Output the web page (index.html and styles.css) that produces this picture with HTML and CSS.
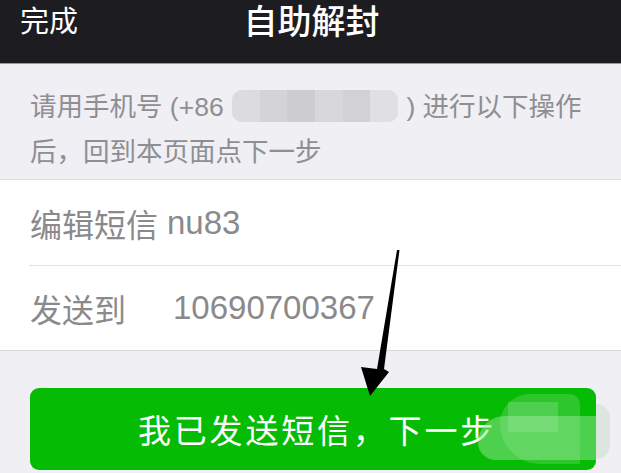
FILE: index.html
```html
<!DOCTYPE html>
<html lang="zh">
<head>
<meta charset="utf-8">
<title>自助解封</title>
<link rel="stylesheet" href="styles.css">
</head>
<body>
<div class="screen">
  <header class="nav">
    <span class="nav-left">完成</span>
    <span class="nav-title">自助解封</span>
  </header>
  <section class="notice">
    <p class="notice-text">请用手机号 (+86&nbsp;<span class="masked"><span class="px p1"></span><span class="px p2"></span><span class="px p3"></span><span class="px p4"></span><span class="px p5"></span><span class="px p6"></span></span>&nbsp;) 进行以下操作后，回到本页面点下一步</p>
  </section>
  <section class="list">
    <div class="row"><span class="label">编辑短信</span><span class="value">nu83</span></div>
    <div class="row"><span class="label wide">发送到</span><span class="value">10690700367</span></div>
  </section>
  <section class="actions">
    <button class="primary">我已发送短信，下一步</button>
    <div class="blur">
      <span class="b b1"></span><span class="b b2"></span><span class="b b3"></span><span class="b b4"></span>
    </div>
  </section>
  <svg class="arrow" width="621" height="473" viewBox="0 0 621 473">
    <polygon points="397,250 399.5,250 384,369 389,372 370,396 361,367 377,369" fill="#000"/>
  </svg>
</div>
</body>
</html>
```
FILE: styles.css
```css
* { box-sizing: border-box; margin: 0; padding: 0; }
html, body { width: 621px; height: 473px; overflow: hidden; }
body {
  background: #efeff4;
  font-family: "Liberation Sans", "Noto Sans CJK SC", sans-serif;
}
.screen { position: relative; width: 621px; height: 473px; background: #efeff4; }
.nav {
  height: 64px;
  background: #1d1c21;
  border-bottom: 1px solid #9a9a9e;
  display: flex;
  align-items: center;
  justify-content: center;
  position: relative;
  color: #fff;
  padding-bottom: 20px;
}
.nav-left {
  position: absolute;
  left: 20px;
  top: 2px;
  font-size: 29px;
  line-height: 40px;
}
.nav-title {
  font-size: 34px;
  line-height: 44px;
  font-weight: 500;
  margin-left: 2px;
}
.notice {
  height: 116px;
  border-bottom: 1px solid #dcdce0;
  padding: 21px 16px 0 30px;
}
.notice-text {
  color: #8e8e93;
  font-size: 26.5px;
  line-height: 45px;
}
.masked {
  display: inline-flex;
  width: 166px;
  height: 32px;
  vertical-align: -6px;
  background: #e4e4e8;
  border-radius: 10px;
  overflow: hidden;
  margin: 0 1px;
}
.px { flex: 1; }
.p1 { background: #dcdce0; }
.p2 { background: #d4d4d8; }
.p3 { background: #cdcdd1; }
.p4 { background: #d8d8dc; }
.p5 { background: #d2d2d6; }
.p6 { background: #e0e0e4; }
.list {
  background: #fff;
  border-bottom: 1px solid #d8d8dc;
  padding-left: 29px;
}
.row {
  height: 85px;
  display: flex;
  align-items: center;
  color: #8a8a8c;
  font-size: 32px;
  gap: 9px;
}
.row + .row { border-top: 1.5px solid #e2e2e4; }
.label { padding-left: 1px; }
.label.wide { width: 135px; }
.value { font-size: 33px; }
.actions {
  padding: 37px 25px 0 30px;
  position: relative;
}
.primary {
  width: 566px;
  height: 82px;
  border: none;
  border-radius: 9px;
  background: #05bb04;
  color: #fff;
  font-family: "Liberation Sans", "Noto Sans CJK SC", sans-serif;
  font-size: 33px;
  letter-spacing: 2.8px;
  padding-left: 8px;
}
.blur {
  position: absolute;
  left: 478px;
  top: 43px;
  width: 132px;
  height: 72px;
}
.b { position: absolute; display: block; }
.b1 { left: 22px; top: 0; width: 80px; height: 70px; background: rgba(120, 220, 120, 0.35); border-radius: 30px 10px 0 40px; }
.b2 { left: 0; top: 22px; width: 118px; height: 44px; background: rgba(150, 230, 150, 0.5); border-radius: 30px 0 0 20px; }
.b3 { left: 30px; top: 8px; width: 50px; height: 30px; background: rgba(180, 240, 180, 0.25); }
.b4 { left: 118px; top: 10px; width: 14px; height: 55px; background: #dde6de; border-radius: 0 20px 20px 0; }
.arrow { position: absolute; left: 0; top: 0; pointer-events: none; }
```
